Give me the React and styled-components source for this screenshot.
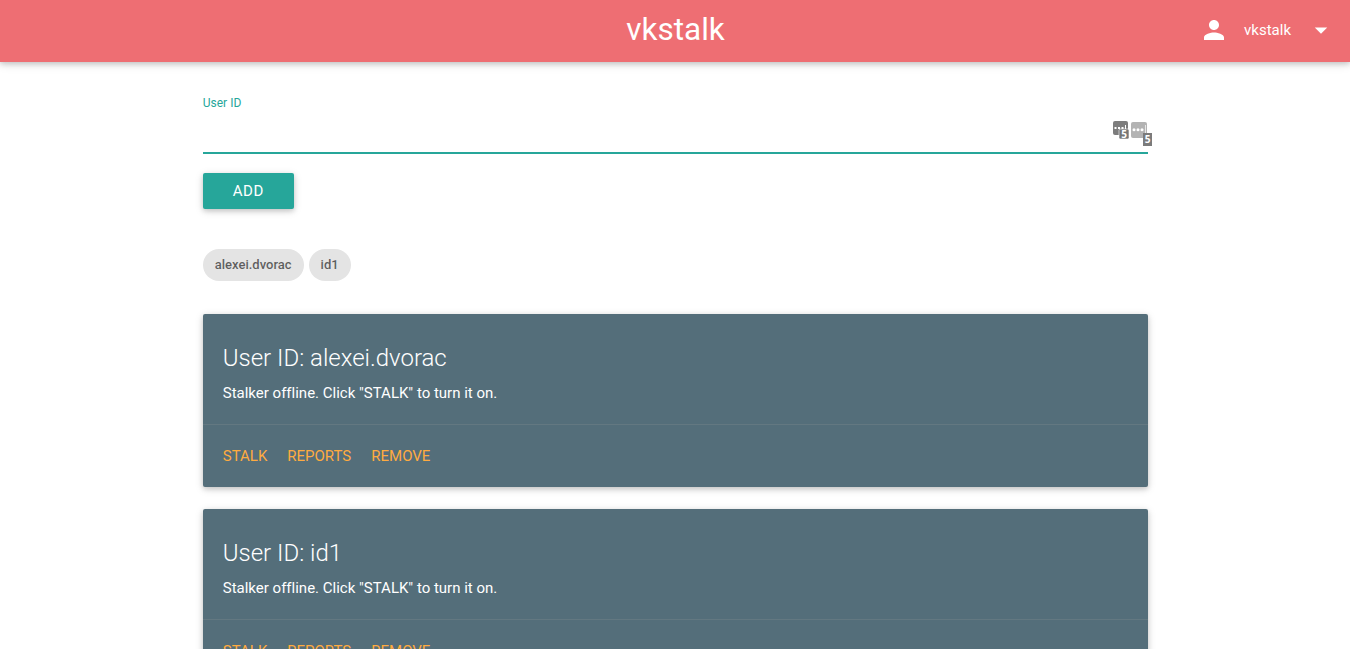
import React from "react";
import styled, { createGlobalStyle } from "styled-components";

const GlobalStyle = createGlobalStyle`
  *, *::before, *::after { box-sizing: border-box; }
  html, body { margin: 0; height: 100%; overflow: hidden; }
  body {
    background: #fff;
    color: rgba(0, 0, 0, 0.87);
    font-family: Roboto, "Liberation Sans", sans-serif;
    font-size: 15px;
    line-height: 22px;
  }
`;

const elevation = `box-shadow: 0 2px 5px 0 rgba(0, 0, 0, 0.16), 0 2px 10px 0 rgba(0, 0, 0, 0.12);`;

const NavBar = styled.nav`
  display: grid;
  grid-template-columns: 1fr auto 1fr;
  align-items: center;
  height: 62px;
  padding: 0 14px 2px 15px;
  background: #ee6e73;
  color: #fff;
  ${elevation}
`;

const Brand = styled.a`
  grid-column: 2;
  font-size: 31.5px;
  line-height: 60px;
`;

const Account = styled.a`
  justify-self: end;
  display: flex;
  align-items: center;
`;

const AccountName = styled.span`
  margin: 0 15px;
`;

const NavIcon = styled.svg`
  display: block;
  width: 30px;
  height: 30px;
  fill: #fff;
`;

const Container = styled.main`
  width: 945px;
  margin: 0 0 0 202.75px;
  padding-top: 30px;
`;

const Field = styled.div`
  height: 62px;
  display: flex;
  flex-direction: column;
  border-bottom: 2px solid #26a69a;
`;

const Label = styled.label`
  color: #26a69a;
  font-size: 12px;
`;

const InputRow = styled.div`
  position: relative;
  flex: 1;
  display: flex;
`;

const Input = styled.input`
  flex: 1;
  min-width: 0;
  padding: 0;
  border: 0;
  outline: 0;
  background: transparent;
  font: inherit;
`;

const AutofillBadges = styled.svg`
  position: absolute;
  top: 6px;
  right: -5px;
  width: 41px;
  height: 28px;
  font-family: "Open Sans", sans-serif;
`;

const Button = styled.button`
  display: block;
  height: 36px;
  min-width: 91px;
  margin-top: 19px;
  padding: 0 30px;
  border: 0;
  border-radius: 2px;
  background: #26a69a;
  color: #fff;
  font: inherit;
  line-height: 36px;
  letter-spacing: 0.5px;
  text-align: left;
  text-transform: uppercase;
  ${elevation}
`;

const Chips = styled.div`
  display: flex;
  gap: 5px;
  margin: 40px 0 33px;
`;

const Chip = styled.span`
  height: 32px;
  padding: 0 12px;
  border-radius: 16px;
  background: #e4e4e4;
  color: rgba(0, 0, 0, 0.6);
  font-size: 13px;
  font-weight: 500;
  line-height: 32px;
`;

const CardList = styled.div`
  display: flex;
  flex-direction: column;
  gap: 22px;
`;

const CardBox = styled.section`
  border-radius: 2px;
  background: #546e7a;
  color: #fff;
  ${elevation}
`;

const CardContent = styled.div`
  padding: 20px;
`;

const CardTitle = styled.h2`
  margin: 0;
  font-size: 24px;
  font-weight: 300;
  line-height: 48px;
`;

const CardText = styled.p`
  margin: 0;
  font-variant-ligatures: none;
`;

const CardActions = styled.div`
  display: flex;
  gap: 20px;
  padding: 20px;
  border-top: 1px solid rgba(160, 160, 160, 0.2);
`;

const Action = styled.a`
  color: #ffab40;
  text-transform: uppercase;
`;

const users = ["alexei.dvorac", "id1"];

function PersonIcon() {
  return (
    <NavIcon viewBox="0 0 24 24">
      <path d="M12 12c2.21 0 4-1.79 4-4s-1.79-4-4-4-4 1.79-4 4 1.79 4 4 4zm0 2c-2.67 0-8 1.34-8 4v2h16v-2c0-2.66-5.33-4-8-4z" />
    </NavIcon>
  );
}

function DropDownIcon() {
  return (
    <NavIcon viewBox="0 0 24 24">
      <path d="M7 10l5 5 5-5z" />
    </NavIcon>
  );
}

function PasswordBadges() {
  return (
    <AutofillBadges viewBox="0 0 41 28">
      <rect x="1" y="1" width="15" height="14" rx="2" fill="#7d7d7d" />
      <g fill="#fff">
        <rect x="2.5" y="7" width="2" height="2" />
        <rect x="6" y="7" width="2" height="2" />
        <rect x="9.5" y="7" width="2" height="2" />
        <rect x="13" y="5" width="1" height="4" />
      </g>
      <rect x="7" y="9" width="10" height="10" rx="1.5" fill="#757575" stroke="#fff" strokeWidth="0.6" />
      <text x="12" y="17.5" fill="#fff" fontSize="10" fontWeight="700" textAnchor="middle">5</text>
      <rect x="19" y="2" width="16" height="16" rx="2" fill="#b3b3b3" />
      <g fill="#fff">
        <circle cx="22" cy="9.7" r="1.5" />
        <circle cx="26" cy="9.7" r="1.5" />
        <circle cx="30" cy="9.7" r="1.5" />
        <rect x="33" y="5" width="1" height="8" opacity="0.7" />
      </g>
      <rect x="31" y="13" width="9" height="13" fill="#7b7b7b" />
      <text x="35.5" y="22.8" fill="#fff" fontSize="10" fontWeight="700" textAnchor="middle">5</text>
    </AutofillBadges>
  );
}

function UserCard({ id }) {
  return (
    <CardBox>
      <CardContent>
        <CardTitle>User ID: {id}</CardTitle>
        <CardText>Stalker offline. Click "STALK" to turn it on.</CardText>
      </CardContent>
      <CardActions>
        <Action>Stalk</Action>
        <Action>Reports</Action>
        <Action>Remove</Action>
      </CardActions>
    </CardBox>
  );
}

export default function App() {
  return (
    <>
      <GlobalStyle />
      <NavBar>
        <Brand>vkstalk</Brand>
        <Account>
          <PersonIcon />
          <AccountName>vkstalk</AccountName>
          <DropDownIcon />
        </Account>
      </NavBar>
      <Container>
        <Field>
          <Label htmlFor="user-id">User ID</Label>
          <InputRow>
            <Input id="user-id" type="text" />
            <PasswordBadges />
          </InputRow>
        </Field>
        <Button type="button">Add</Button>
        <Chips>
          {users.map((id) => (
            <Chip key={id}>{id}</Chip>
          ))}
        </Chips>
        <CardList>
          {users.map((id) => (
            <UserCard key={id} id={id} />
          ))}
        </CardList>
      </Container>
    </>
  );
}
